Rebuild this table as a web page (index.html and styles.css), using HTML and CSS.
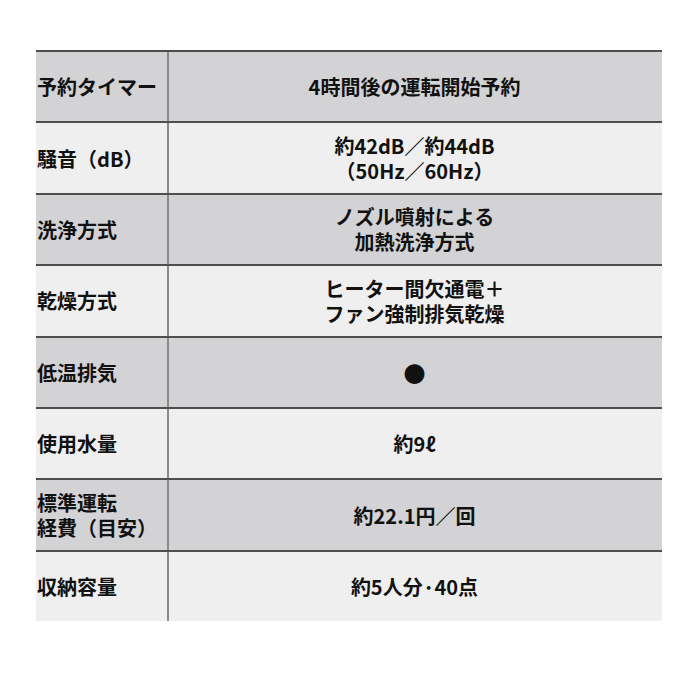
FILE: index.html
```html
<!DOCTYPE html>
<html lang="ja">
<head>
<meta charset="utf-8">
<link rel="stylesheet" href="styles.css">
</head>
<body>
<div class="spec">
  <div class="row dark"><div class="label">予約タイマー</div><div class="value">4時間後の運転開始予約</div></div>
  <div class="row light"><div class="label">騒音（dB）</div><div class="value">約42dB／約44dB<br>（50Hz／60Hz）</div></div>
  <div class="row dark"><div class="label">洗浄方式</div><div class="value">ノズル噴射による<br>加熱洗浄方式</div></div>
  <div class="row light"><div class="label">乾燥方式</div><div class="value">ヒーター間欠通電＋<br>ファン強制排気乾燥</div></div>
  <div class="row dark"><div class="label">低温排気</div><div class="value"><span class="dot">●</span></div></div>
  <div class="row light"><div class="label">使用水量</div><div class="value">約9ℓ</div></div>
  <div class="row dark"><div class="label">標準運転<br>経費（目安）</div><div class="value">約22.1円／回</div></div>
  <div class="row light"><div class="label">収納容量</div><div class="value">約5人分·40点</div></div>
</div>
</body>
</html>
```
FILE: styles.css
```css
html, body {
  margin: 0;
  padding: 0;
  background: #ffffff;
}
body {
  font-family: "Noto Sans CJK JP", "Noto Sans", sans-serif;
  color: #111111;
}
.spec {
  margin: 50px 0 0 36px;
  width: 626px;
  display: flex;
  flex-direction: column;
}
.row {
  display: grid;
  grid-template-columns: 133px 1fr;
  height: 71.4px;
  box-sizing: border-box;
  border-top: 2px solid #4e4e4e;
}
.dark { background: #d3d3d5; }
.light { background: #efefef; }
.label {
  display: flex;
  align-items: center;
  padding-left: 1px;
  border-right: 2px solid #8a8a8a;
  font-size: 20px;
  font-weight: 700;
  line-height: 25px;
}
.value {
  display: flex;
  align-items: center;
  justify-content: center;
  text-align: center;
  font-size: 20px;
  font-weight: 700;
  line-height: 25px;
  padding-right: 2px;
}
.dot {
  font-size: 22px;
  line-height: 25px;
}
```
